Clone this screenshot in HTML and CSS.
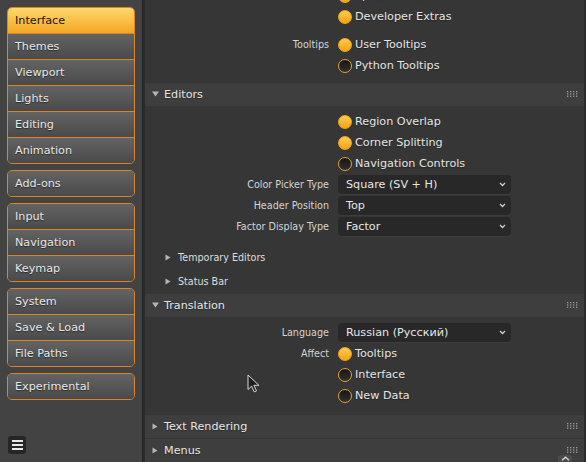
FILE: index.html
```html
<!DOCTYPE html>
<html lang="en">
<head>
  <meta charset="UTF-8" />
  <title>Preferences</title>
  <link rel="stylesheet" href="styles.css">
</head>
<body>
  <div class="sidebar">
    <div class="nav-group">
      <div class="nav-item active">Interface</div>
      <div class="nav-item">Themes</div>
      <div class="nav-item">Viewport</div>
      <div class="nav-item">Lights</div>
      <div class="nav-item">Editing</div>
      <div class="nav-item">Animation</div>
    </div>
    <div class="nav-group">
      <div class="nav-item">Add-ons</div>
    </div>
    <div class="nav-group">
      <div class="nav-item">Input</div>
      <div class="nav-item">Navigation</div>
      <div class="nav-item">Keymap</div>
    </div>
    <div class="nav-group">
      <div class="nav-item">System</div>
      <div class="nav-item">Save &amp; Load</div>
      <div class="nav-item">File Paths</div>
    </div>
    <div class="nav-group">
      <div class="nav-item">Experimental</div>
    </div>

    <div class="menu-btn">
      <span></span><span></span><span></span>
    </div>
  </div>

  <div class="main">
    <div class="scroll">
      <!-- Display panel, scrolled partly out of view -->
      <div class="panel-body">
        <div class="prop"><div class="label"></div><div class="check on"></div><span class="text">Splash Screen</span></div>
        <div class="prop"><div class="label"></div><div class="check on"></div><span class="text">Developer Extras</span></div>
        <div class="spacer"></div>
        <div class="prop"><div class="label">Tooltips</div><div class="check on"></div><span class="text">User Tooltips</span></div>
        <div class="prop"><div class="label"></div><div class="check"></div><span class="text">Python Tooltips</span></div>
      </div>

      <div class="panel-header">
        <svg class="tri" width="7" height="6" viewBox="0 0 7 6"><path d="M0 0.5h7L3.5 5.5z"/></svg>
        <span class="title">Editors</span>
        <svg class="grip" width="11" height="6" viewBox="0 0 11 6"><g><rect x="0" y="0" width="1.3" height="1.3"/><rect x="3" y="0" width="1.3" height="1.3"/><rect x="6" y="0" width="1.3" height="1.3"/><rect x="9" y="0" width="1.3" height="1.3"/><rect x="0" y="2.3" width="1.3" height="1.3"/><rect x="3" y="2.3" width="1.3" height="1.3"/><rect x="6" y="2.3" width="1.3" height="1.3"/><rect x="9" y="2.3" width="1.3" height="1.3"/><rect x="0" y="4.6" width="1.3" height="1.3"/><rect x="3" y="4.6" width="1.3" height="1.3"/><rect x="6" y="4.6" width="1.3" height="1.3"/><rect x="9" y="4.6" width="1.3" height="1.3"/></g></svg>
      </div>
      <div class="panel-body editors">
        <div class="prop"><div class="label"></div><div class="check on"></div><span class="text">Region Overlap</span></div>
        <div class="prop"><div class="label"></div><div class="check on"></div><span class="text">Corner Splitting</span></div>
        <div class="prop"><div class="label"></div><div class="check"></div><span class="text">Navigation Controls</span></div>
        <div class="prop"><div class="label">Color Picker Type</div><div class="select">Square (SV + H)<svg class="chev" width="7" height="5" viewBox="0 0 7 5"><path d="M1 1l2.5 2.5L6 1"/></svg></div></div>
        <div class="prop"><div class="label">Header Position</div><div class="select">Top<svg class="chev" width="7" height="5" viewBox="0 0 7 5"><path d="M1 1l2.5 2.5L6 1"/></svg></div></div>
        <div class="prop"><div class="label">Factor Display Type</div><div class="select">Factor<svg class="chev" width="7" height="5" viewBox="0 0 7 5"><path d="M1 1l2.5 2.5L6 1"/></svg></div></div>

        <div class="subpanels">
          <div class="sub-header">
            <svg class="tri-r" width="6" height="7" viewBox="0 0 6 7"><path d="M0.5 0.5v6L5.5 3.5z"/></svg>
            <span>Temporary Editors</span>
          </div>
          <div class="sub-header">
            <svg class="tri-r" width="6" height="7" viewBox="0 0 6 7"><path d="M0.5 0.5v6L5.5 3.5z"/></svg>
            <span>Status Bar</span>
          </div>
        </div>
      </div>

      <div class="panel-header">
        <svg class="tri" width="7" height="6" viewBox="0 0 7 6"><path d="M0 0.5h7L3.5 5.5z"/></svg>
        <span class="title">Translation</span>
        <svg class="grip" width="11" height="6" viewBox="0 0 11 6"><g><rect x="0" y="0" width="1.3" height="1.3"/><rect x="3" y="0" width="1.3" height="1.3"/><rect x="6" y="0" width="1.3" height="1.3"/><rect x="9" y="0" width="1.3" height="1.3"/><rect x="0" y="2.3" width="1.3" height="1.3"/><rect x="3" y="2.3" width="1.3" height="1.3"/><rect x="6" y="2.3" width="1.3" height="1.3"/><rect x="9" y="2.3" width="1.3" height="1.3"/><rect x="0" y="4.6" width="1.3" height="1.3"/><rect x="3" y="4.6" width="1.3" height="1.3"/><rect x="6" y="4.6" width="1.3" height="1.3"/><rect x="9" y="4.6" width="1.3" height="1.3"/></g></svg>
      </div>
      <div class="panel-body translation">
        <div class="prop"><div class="label">Language</div><div class="select">Russian (Русский)<svg class="chev" width="7" height="5" viewBox="0 0 7 5"><path d="M1 1l2.5 2.5L6 1"/></svg></div></div>
        <div class="prop"><div class="label">Affect</div><div class="check on"></div><span class="text">Tooltips</span></div>
        <div class="prop"><div class="label"></div><div class="check"></div><span class="text">Interface</span></div>
        <div class="prop"><div class="label"></div><div class="check"></div><span class="text">New Data</span></div>
      </div>

      <div class="panel-header closed">
        <svg class="tri-r" width="6" height="7" viewBox="0 0 6 7"><path d="M0.5 0.5v6L5.5 3.5z"/></svg>
        <span class="title">Text Rendering</span>
        <svg class="grip" width="11" height="6" viewBox="0 0 11 6"><g><rect x="0" y="0" width="1.3" height="1.3"/><rect x="3" y="0" width="1.3" height="1.3"/><rect x="6" y="0" width="1.3" height="1.3"/><rect x="9" y="0" width="1.3" height="1.3"/><rect x="0" y="2.3" width="1.3" height="1.3"/><rect x="3" y="2.3" width="1.3" height="1.3"/><rect x="6" y="2.3" width="1.3" height="1.3"/><rect x="9" y="2.3" width="1.3" height="1.3"/><rect x="0" y="4.6" width="1.3" height="1.3"/><rect x="3" y="4.6" width="1.3" height="1.3"/><rect x="6" y="4.6" width="1.3" height="1.3"/><rect x="9" y="4.6" width="1.3" height="1.3"/></g></svg>
      </div>
      <div class="panel-header closed">
        <svg class="tri-r" width="6" height="7" viewBox="0 0 6 7"><path d="M0.5 0.5v6L5.5 3.5z"/></svg>
        <span class="title">Menus</span>
        <svg class="grip" width="11" height="6" viewBox="0 0 11 6"><g><rect x="0" y="0" width="1.3" height="1.3"/><rect x="3" y="0" width="1.3" height="1.3"/><rect x="6" y="0" width="1.3" height="1.3"/><rect x="9" y="0" width="1.3" height="1.3"/><rect x="0" y="2.3" width="1.3" height="1.3"/><rect x="3" y="2.3" width="1.3" height="1.3"/><rect x="6" y="2.3" width="1.3" height="1.3"/><rect x="9" y="2.3" width="1.3" height="1.3"/><rect x="0" y="4.6" width="1.3" height="1.3"/><rect x="3" y="4.6" width="1.3" height="1.3"/><rect x="6" y="4.6" width="1.3" height="1.3"/><rect x="9" y="4.6" width="1.3" height="1.3"/></g></svg>
      </div>
    </div>

    <!-- scroll-up arrow -->
    <div class="scroll-up">
      <svg width="9" height="5" viewBox="0 0 9 5"><path d="M1 4.2l3.5-3L8 4.2"/></svg>
    </div>

    <!-- mouse pointer -->
    <svg class="cursor" width="13" height="19" viewBox="0 0 13 19"><path d="M1 1v14.5l3.6-3.4 2.6 5.8 2.3-1-2.6-5.6h5z"/></svg>
  </div>
</body>
</html>
```

FILE: styles.css
```css
* {
  box-sizing: border-box;
  margin: 0;
  padding: 0;
}

body {
  width: 586px;
  height: 462px;
  overflow: hidden;
  display: flex;
  background: #2b2b2b;
  font-family: 'DejaVu Sans', 'Noto Sans', sans-serif;
  font-size: 11.2px;
  color: #e6e6e6;
}

/* Sidebar */
.sidebar {
  width: 143px;
  background: #434343;
  border-right: 1px solid #262626;
  padding: 7px 0 0 7px;
  display: flex;
  flex-direction: column;
  gap: 6px;
}

.nav-group {
  width: 128px;
  border: 1px solid #d9852e;
  border-radius: 5px;
  overflow: hidden;
}

.nav-item {
  height: 26px;
  padding-left: 7px;
  line-height: 25px;
  background: linear-gradient(#636363, #4a4a4a);
  color: #e8e8e8;
  text-shadow: 0 1px 1px rgba(0, 0, 0, 0.5);
  border-top: 1px solid #d9852e;
}

.nav-item:first-child {
  height: 25px;
  border-top: none;
}

.nav-item.active {
  background: linear-gradient(#ffd86a, #f2a623);
  color: #161616;
  text-shadow: none;
}

.menu-btn {
  margin-top: auto;
  margin-bottom: 8px;
  margin-left: 1px;
  width: 18px;
  height: 18px;
  border-radius: 3px;
  background: #262626;
  display: flex;
  flex-direction: column;
  justify-content: center;
  align-items: center;
  gap: 2px;
}

.menu-btn span {
  width: 11px;
  height: 2px;
  background: #e8e8e8;
}

/* Main region */
.main {
  flex: 1;
  position: relative;
  overflow: hidden;
  padding: 0 2px 0 2px;
}

.scroll {
  margin-top: -20px;
}

.panel-body {
  background: #363636;
  padding: 5px 0 6px 0;
}

.panel-body.editors {
  padding-bottom: 0;
}

.panel-body.translation {
  padding-bottom: 8px;
}

.spacer {
  height: 7px;
}

.prop {
  height: 21px;
  display: flex;
  align-items: center;
}

.label {
  width: 184px;
  margin-right: 9px;
  text-align: right;
  font-size: 9.6px;
  color: #d4d4d4;
}

.text {
  margin-left: 3px;
  text-shadow: 0 1px 1px rgba(0, 0, 0, 0.35);
}

.check {
  width: 14px;
  height: 14px;
  border-radius: 50%;
  border: 1px solid #e3a22f;
  background: linear-gradient(#161616, #303030);
}

.check.on {
  border-color: #f0a41f;
  background: linear-gradient(#ffcc45, #f1a31b);
}

.select {
  width: 173px;
  height: 19px;
  border-radius: 4px;
  background: #282828;
  box-shadow: 0 1px 0 #3c3c3c;
  padding: 0 5px 0 8px;
  display: flex;
  align-items: center;
  justify-content: space-between;
}

.chev path {
  fill: none;
  stroke: #cfcfcf;
  stroke-width: 1.3;
}

.subpanels {
  margin-top: 8px;
}

.sub-header {
  height: 24px;
  display: flex;
  align-items: center;
  padding-left: 20px;
  font-size: 9.6px;
  color: #dedede;
}

.tri path,
.tri-r path {
  fill: #b4b4b4;
}

.sub-header .tri-r {
  margin-right: 7px;
}

.panel-header {
  height: 24px;
  background: #3e3e3e;
  box-shadow: inset 0 1px 0 #353535;
  display: flex;
  align-items: center;
  padding: 0 6px 0 7px;
}

.panel-header .tri {
  margin-right: 5px;
}

.panel-header .tri-r {
  margin-right: 6px;
}

.panel-header .title {
  flex: 1;
  text-shadow: 0 1px 1px rgba(0, 0, 0, 0.35);
}

.grip rect {
  fill: #9a9a9a;
}

.scroll-up {
  position: absolute;
  right: 14px;
  bottom: -3px;
  width: 14px;
  height: 10px;
  border-radius: 3px;
  background: #4b4b4b;
  display: flex;
  justify-content: center;
  padding-top: 1px;
}

.scroll-up path {
  fill: none;
  stroke: #d8d8d8;
  stroke-width: 1.3;
}

.cursor {
  position: absolute;
  left: 104px;
  top: 374px;
}

.cursor path {
  fill: #1c1f1e;
  stroke: #d8d8d8;
  stroke-width: 1;
}
```
